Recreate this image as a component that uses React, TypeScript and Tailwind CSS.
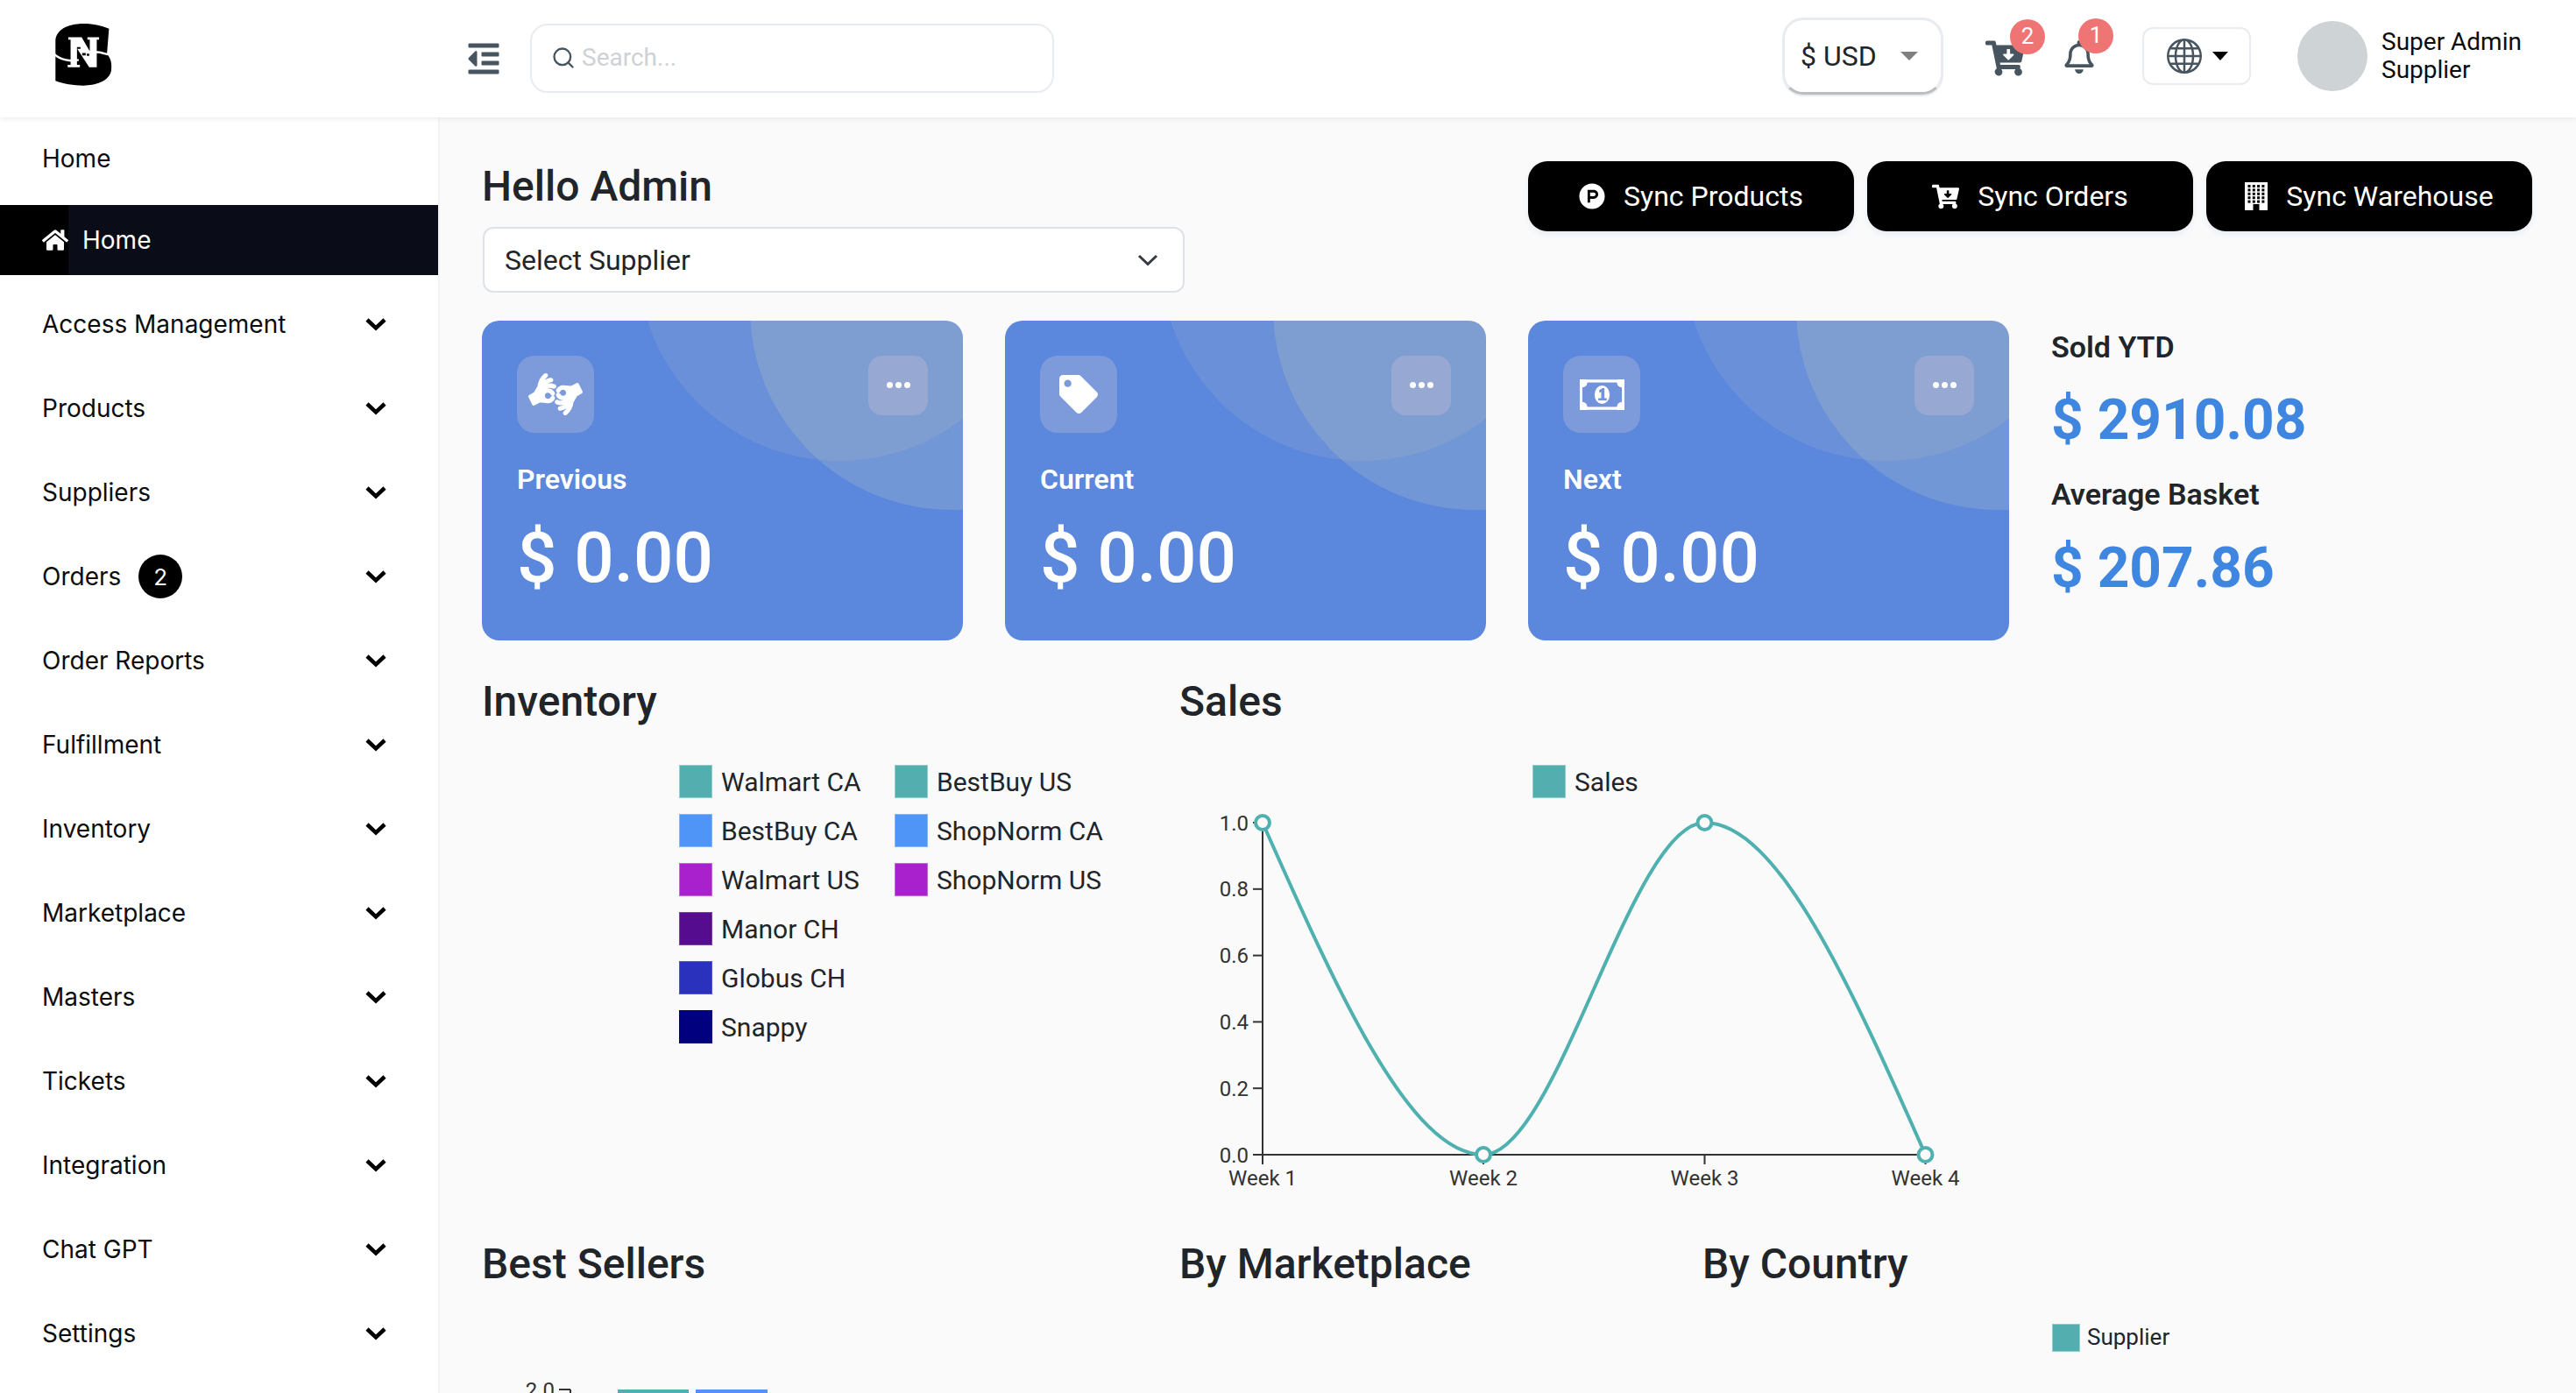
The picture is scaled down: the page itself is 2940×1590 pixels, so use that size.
import { FaAmericanSignLanguageInterpreting, FaCartArrowDown, FaHome, FaOutdent, FaProductHunt, FaRegBell, FaTag } from 'react-icons/fa'
import { BsGlobe } from 'react-icons/bs'
import { FiSearch } from 'react-icons/fi'

const navItems = [
  'Access Management',
  'Products',
  'Suppliers',
  'Orders',
  'Order Reports',
  'Fulfillment',
  'Inventory',
  'Marketplace',
  'Masters',
  'Tickets',
  'Integration',
  'Chat GPT',
  'Settings',
]

const legendLeft = [
  { label: 'Walmart CA', color: 'bg-[#52aeaf] border-[#8fd0cf]' },
  { label: 'BestBuy CA', color: 'bg-[#4f95f7] border-[#86b6fa]' },
  { label: 'Walmart US', color: 'bg-[#a921cd] border-[#c467de]' },
  { label: 'Manor CH', color: 'bg-[#560c8e] border-[#7d3fab]' },
  { label: 'Globus CH', color: 'bg-[#2a31bc] border-[#4d54ce]' },
  { label: 'Snappy', color: 'bg-[#01017f] border-[#01017f]' },
]

const legendRight = [
  { label: 'BestBuy US', color: 'bg-[#52aeaf] border-[#8fd0cf]' },
  { label: 'ShopNorm CA', color: 'bg-[#4f95f7] border-[#86b6fa]' },
  { label: 'ShopNorm US', color: 'bg-[#a921cd] border-[#c467de]' },
]

function Logo() {
  return (
    <svg width="67" height="73" viewBox="185 72 200 220" className="-mt-[10px]">
      <path
        d="M372 92 L365 180 C380 195 382 215 380 235 C375 275 320 288 285 288 C250 288 215 282 188 272 L188 135 C188 100 225 75 285 75 C310 75 340 80 372 92Z"
        fill="#000"
      />
      <path d="M184 180 C205 200 240 206 268 200" stroke="#fff" strokeWidth="7" fill="none" />
      <path d="M300 172 C325 170 348 174 368 181" stroke="#fff" strokeWidth="7" fill="none" />
      <path
        d="M232 122 H278 L306 170 V130 H298 V122 H338 V130 H330 V225 H304 L262 160 V217 H272 V225 H230 V217 H240 V130 H232Z"
        fill="#fff"
      />
      <path d="M262 156 H274 V162 H262Z M280 176 H292 V184 H280Z M296 178 H304 V186 H296Z" fill="#000" />
    </svg>
  )
}

function Chevron() {
  return (
    <svg width="26" height="16" viewBox="0 0 26 16" fill="none">
      <polyline points="3,3 13,12.5 23,3" stroke="#000" strokeWidth="4.5" />
    </svg>
  )
}

function BuildingIcon() {
  const rows = [0, 1, 2, 3, 4]
  const cols = [0, 1, 2, 3]
  return (
    <svg width="26" height="32" viewBox="0 0 26 32">
      <rect width="26" height="32" fill="#fff" />
      {rows.map((r) =>
        cols.map((c) => <rect key={`${r}-${c}`} x={3.5 + c * 5.3} y={3 + r * 4.4} width="3" height="3" fill="#000" />),
      )}
      <rect x="9.5" y="25" width="7" height="7" fill="#000" />
    </svg>
  )
}

function BillIcon() {
  return (
    <svg width="51" height="35" viewBox="0 0 154 104">
      <rect width="154" height="104" rx="3" fill="#fff" />
      <rect x="9" y="10" width="136" height="84" fill="#7093db" />
      <circle cx="9" cy="10" r="17" fill="#fff" />
      <circle cx="145" cy="10" r="17" fill="#fff" />
      <circle cx="9" cy="94" r="17" fill="#fff" />
      <circle cx="145" cy="94" r="17" fill="#fff" />
      <ellipse cx="77" cy="52" rx="26" ry="32" fill="#fff" />
      <path d="M66 38 L78 29 H85 V64 H93 V72 H64 V64 H74 V42 L69 46Z" fill="#7093db" />
    </svg>
  )
}

function Sidebar() {
  return (
    <aside className="w-[502px] shrink-0 bg-white border-r-2 border-[#f3f3f3] text-[28px] text-[#0c0c0c] font-['Inter',sans-serif]">
      <div className="h-[94px] pl-[48px] flex items-center">Home</div>
      <div className="mt-[6px] mb-[8px] h-[80px] pl-[48px] flex items-center gap-[16px] text-white bg-[linear-gradient(90deg,#000_78px,#0a0d18_78px)]">
        <FaHome size={30} />
        <span>Home</span>
      </div>
      {navItems.map((item) => (
        <div key={item} className="h-[96px] pl-[48px] pr-[58px] flex items-center justify-between">
          <div className="flex items-center gap-[20px]">
            <span>{item}</span>
            {item === 'Orders' && (
              <span className="w-[50px] h-[50px] rounded-full bg-black text-white text-[26px] flex items-center justify-center">
                2
              </span>
            )}
          </div>
          <Chevron />
        </div>
      ))}
    </aside>
  )
}

function Header() {
  return (
    <header className="relative z-10 h-[134px] shrink-0 bg-white shadow-[0_2px_6px_rgba(0,0,0,0.07)] flex items-center">
      <div className="w-[532px] shrink-0 pl-[62px]">
        <Logo />
      </div>
      <FaOutdent size={40} className="text-[#46555f] mr-[33px]" />
      <div className="w-[598px] h-[79px] -mt-[2px] rounded-[20px] border-2 border-[#e8ecf1] flex items-center pl-[22px] gap-[7px]">
        <FiSearch size={28} className="text-[#47555f]" />
        <span className="text-[28px] text-[#ced2d6]">Search...</span>
      </div>

      <div className="ml-auto flex items-center">
        <div className="w-[184px] h-[88px] -mt-[6px] rounded-[24px] border-[3px] border-[#e8ecf1] border-b-[#bdbdbd] flex items-center pl-[18px] text-[32px] text-[#212529] shadow-[0_2px_0_#e8ecf1]">
          <span>$ USD</span>
          <span className="ml-[27px] w-0 h-0 border-l-[10px] border-r-[10px] border-t-[10px] border-l-transparent border-r-transparent border-t-[#808080]" />
        </div>

        <div className="relative ml-[48px] w-[46px] h-[40px] -mt-[3px]">
          <FaCartArrowDown size={45} className="text-[#46555f] -mt-[2px]" />
          <span className="absolute -top-[24px] left-[28px] w-[40px] h-[40px] rounded-full bg-[#ef7575] text-white text-[26px] flex items-center justify-center">
            2
          </span>
        </div>

        <div className="relative ml-[42px] w-[38px] h-[40px] -mt-[3px]">
          <FaRegBell size={38} className="text-[#46555f]" />
          <span className="absolute -top-[25px] left-[18px] w-[40px] h-[40px] rounded-full bg-[#ef7575] text-white text-[26px] flex items-center justify-center">
            1
          </span>
        </div>

        <div className="ml-[53px] w-[124px] h-[66px] -mt-[6px] rounded-[12px] border-2 border-[#e8ecf1] flex items-center pl-[26px]">
          <BsGlobe size={40} className="text-[#46555f]" />
          <span className="ml-[12px] w-0 h-0 border-l-[9px] border-r-[9px] border-t-[10px] border-l-transparent border-r-transparent border-t-black" />
        </div>

        <div className="ml-[53px] w-[80px] h-[80px] -mt-[6px] rounded-full bg-[#ced3d6]" />
        <div className="ml-[16px] w-[222px] -mt-[6px] text-[28px] leading-[32px] text-[#0c0c0c]">
          <div>Super Admin</div>
          <div>Supplier</div>
        </div>
      </div>
    </header>
  )
}

function SyncButton({ icon, label }: { icon: React.ReactNode; label: string }) {
  return (
    <button className="w-[372px] h-[80px] rounded-[22px] bg-black text-white text-[32px] flex items-center justify-center gap-[21px] shadow-[0_4px_6px_rgba(90,135,220,0.1)]">
      {icon}
      <span>{label}</span>
    </button>
  )
}

function StatCard({ icon, title }: { icon: React.ReactNode; title: string }) {
  return (
    <div className="relative w-[549px] h-[365px] rounded-[20px] bg-[#5b87dc] overflow-hidden text-white shrink-0">
      <div className="absolute left-[178px] -top-[300px] w-[460px] h-[460px] rounded-full bg-[rgba(210,215,190,0.12)]" />
      <div className="absolute left-[306px] -top-[244px] w-[460px] h-[460px] rounded-full bg-[rgba(210,215,190,0.2)]" />
      <div className="relative pt-[40px] px-[40px]">
        <div className="flex justify-between items-start">
          <div className="w-[88px] h-[88px] rounded-[20px] bg-[#7d9bda] flex items-center justify-center">{icon}</div>
          <div className="w-[68px] h-[68px] pb-[2px] rounded-[16px] bg-[#97a8d2] flex items-center justify-center gap-[3px]">
            <span className="w-[7px] h-[7px] rounded-full bg-white" />
            <span className="w-[7px] h-[7px] rounded-full bg-white" />
            <span className="w-[7px] h-[7px] rounded-full bg-white" />
          </div>
        </div>
        <div className="mt-[34px] text-[32px] leading-[38px] font-semibold">{title}</div>
        <div className="mt-[24px] text-[80px] leading-[94px] font-medium">$ 0.00</div>
      </div>
    </div>
  )
}

function Swatch({ className }: { className: string }) {
  return <span className={`w-[38px] h-[38px] border shrink-0 ${className}`} />
}

function LegendColumn({ items }: { items: { label: string; color: string }[] }) {
  return (
    <div className="flex flex-col gap-[18px]">
      {items.map((item) => (
        <div key={item.label} className="h-[38px] flex items-center gap-[10px] text-[30px] text-[#212529] whitespace-nowrap">
          <Swatch className={item.color} />
          <span>{item.label}</span>
        </div>
      ))}
    </div>
  )
}

function SalesChart() {
  const yTicks = ['1.0', '0.8', '0.6', '0.4', '0.2', '0.0']
  const points = [
    { x: 95, y: 14 },
    { x: 347, y: 393 },
    { x: 599.5, y: 14 },
    { x: 851.5, y: 393 },
  ]
  const top = 14
  const bottom = 393
  return (
    <svg width="900" height="440" viewBox="0 0 900 440" className="block mt-[14px]">
      <line x1="95" y1={top} x2="95" y2={bottom} stroke="#333" strokeWidth="2" />
      <line x1="84" y1={bottom} x2="852" y2={bottom} stroke="#333" strokeWidth="2" />
      {yTicks.map((t, i) => {
        const y = top + i * ((bottom - top) / 5)
        return (
          <g key={t}>
            <line x1="84" y1={y} x2="95" y2={y} stroke="#333" strokeWidth="2" />
            <text x="79" y={y + 8.5} textAnchor="end" fontSize="24" fill="#333">
              {t}
            </text>
          </g>
        )
      })}
      {points.map((p, i) => (
        <g key={p.x}>
          <line x1={p.x} y1={bottom} x2={p.x} y2={bottom + 11} stroke="#333" strokeWidth="2" />
          <text x={p.x} y={bottom + 35} textAnchor="middle" fontSize="24" fill="#333">
            {`Week ${i + 1}`}
          </text>
        </g>
      ))}
      <path
        d="M95 14 C179 203.5 263 393 347 393 C431 393 515.5 14 599.5 14 C683.5 14 767.5 203.5 851.5 393"
        fill="none"
        stroke="#4fb0b0"
        strokeWidth="4"
      />
      {points.map((p) => (
        <circle key={p.x} cx={p.x} cy={p.y} r="8" fill="#fafafa" stroke="#4fb0b0" strokeWidth="4" />
      ))}
    </svg>
  )
}

function BestSellersChart() {
  return (
    <svg width="400" height="40" viewBox="0 0 400 40" className="block mt-[99px] overflow-visible">
      <text x="83" y="24.5" textAnchor="end" fontSize="24" fill="#333">
        2.0
      </text>
      <line x1="88" y1="16" x2="101" y2="16" stroke="#333" strokeWidth="2" />
      <line x1="101" y1="16" x2="101" y2="40" stroke="#333" strokeWidth="2" />
      <rect x="155" y="16" width="81" height="30" fill="#52aeaf" />
      <rect x="244" y="16" width="82" height="30" fill="#4f95f7" />
    </svg>
  )
}

function Dashboard() {
  return (
    <main className="flex-1 min-w-0 pl-[48px] pr-[50px] pt-[50px] text-[#212529]">
      <div className="flex justify-between items-start">
        <div>
          <h1 className="text-[48px] leading-[58px] font-medium">Hello Admin</h1>
          <div className="mt-[17px] ml-[1px] w-[801px] h-[75px] rounded-[12px] border-2 border-[#dee2e6] bg-white flex items-center justify-between pl-[23px] pr-[28px] text-[32px]">
            <span>Select Supplier</span>
            <svg width="24" height="14" viewBox="0 0 24 14" fill="none">
              <polyline points="2,2 12,11.5 22,2" stroke="#343a40" strokeWidth="3" />
            </svg>
          </div>
        </div>
        <div className="flex gap-[15px]">
          <SyncButton icon={<FaProductHunt size={30} />} label="Sync Products" />
          <SyncButton icon={<FaCartArrowDown size={31} />} label="Sync Orders" />
          <SyncButton icon={<BuildingIcon />} label="Sync Warehouse" />
        </div>
      </div>

      <div className="mt-[32px] flex gap-[48px]">
        <StatCard icon={<FaAmericanSignLanguageInterpreting size={62} />} title="Previous" />
        <StatCard icon={<FaTag size={44} />} title="Current" />
        <StatCard icon={<BillIcon />} title="Next" />
        <div className="-mt-[2px]">
          <div className="text-[34px] leading-[64px] font-semibold">Sold YTD</div>
          <div className="mt-[7px] text-[64px] leading-[90px] font-bold text-[#3f86e0]">$ 2910.08</div>
          <div className="mt-[7px] text-[34px] leading-[64px] font-semibold">Average Basket</div>
          <div className="mt-[8px] text-[64px] leading-[90px] font-bold text-[#3f86e0]">$ 207.86</div>
        </div>
      </div>

      <div className="mt-[42px] flex h-[642px]">
        <section className="w-[796px] shrink-0">
          <h2 className="text-[48px] leading-[56px] font-medium">Inventory</h2>
          <div className="mt-[44px] pl-[225px] flex">
            <div className="w-[246px]">
              <LegendColumn items={legendLeft} />
            </div>
            <LegendColumn items={legendRight} />
          </div>
        </section>
        <section className="flex-1">
          <h2 className="text-[48px] leading-[56px] font-medium">Sales</h2>
          <div className="mt-[44px] pl-[403px] h-[38px] flex items-center gap-[10px] text-[30px]">
            <Swatch className="bg-[#52aeaf] border-[#8fd0cf]" />
            <span>Sales</span>
          </div>
          <SalesChart />
        </section>
      </div>

      <div className="flex">
        <section className="w-[796px] shrink-0">
          <h2 className="text-[48px] leading-[56px] font-medium">Best Sellers</h2>
          <BestSellersChart />
        </section>
        <section className="w-[597px] shrink-0">
          <h2 className="text-[48px] leading-[56px] font-medium">By Marketplace</h2>
        </section>
        <section className="flex-1">
          <h2 className="text-[48px] leading-[56px] font-medium">By Country</h2>
          <div className="mt-[36px] pl-[399px] flex items-center gap-[8px] text-[26px]">
            <span className="w-[32px] h-[32px] border bg-[#52aeaf] border-[#8fd0cf]" />
            <span>Supplier</span>
          </div>
        </section>
      </div>
    </main>
  )
}

export default function App() {
  return (
    <div className="h-screen overflow-hidden flex flex-col bg-[#fafafa] font-['Roboto',sans-serif]">
      <Header />
      <div className="flex flex-1 min-h-0">
        <Sidebar />
        <Dashboard />
      </div>
    </div>
  )
}
